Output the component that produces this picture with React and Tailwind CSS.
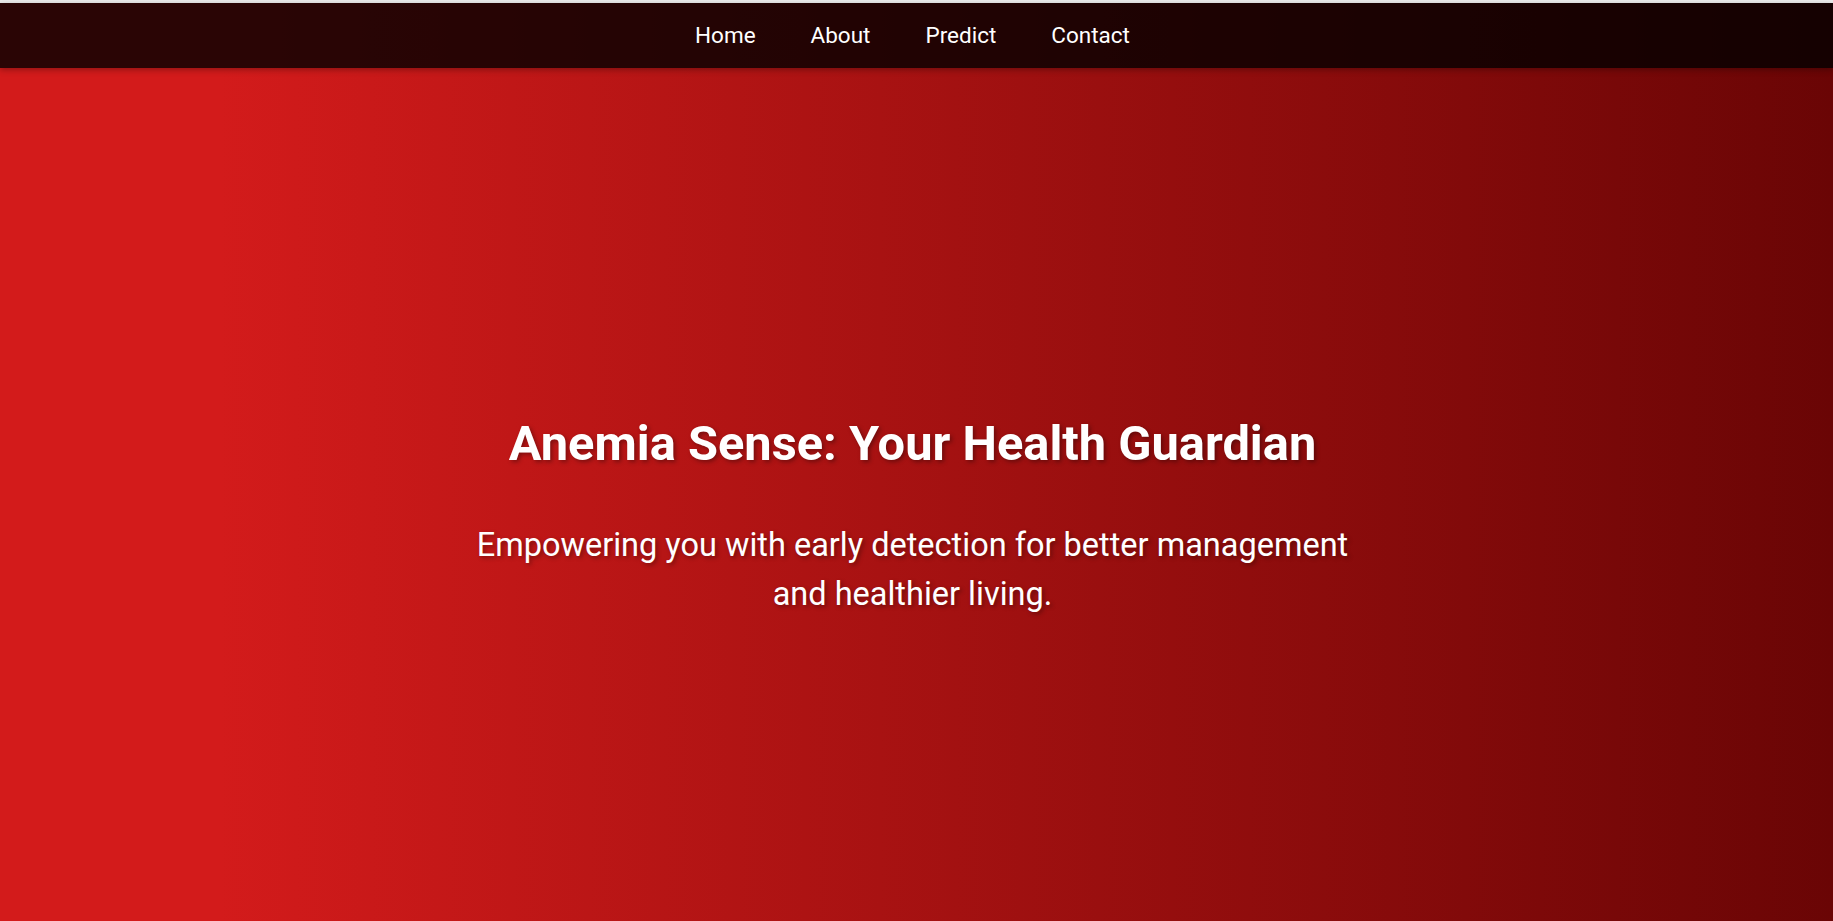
import React from "react";

export default function App() {
  const links = ["Home", "About", "Predict", "Contact"];
  return (
    <div className="w-[1833px] min-h-[921px] bg-[#ececec] pt-[3px]" style={{ fontFamily: "Roboto, 'Liberation Sans', sans-serif" }}>
      <div className="min-h-[918px] flex flex-col bg-[linear-gradient(to_right,#d31b1b_12%,#6a0505_100%)]">
        <nav className="h-[65px] bg-[rgba(0,0,0,0.8)] shadow-[0_2px_6px_rgba(0,0,0,0.3)] flex items-center justify-center pr-2 pt-[2px]">
          <ul className="flex items-center gap-[55px]">
            {links.map((l) => (
              <li key={l}>
                <a href="#" className="text-white text-[22.5px] leading-none">{l}</a>
              </li>
            ))}
          </ul>
        </nav>
        <section className="flex-1 flex flex-col items-center pt-[346px] pr-2 text-white text-center">
          <h1 className="text-[48.8px] leading-[60px] font-bold [text-shadow:2px_2px_4px_rgba(0,0,0,0.35)]">
            Anemia Sense: Your Health Guardian
          </h1>
          <p className="mt-[47px] max-w-[910px] text-[32.5px] leading-[49px] [text-shadow:2px_2px_4px_rgba(0,0,0,0.35)]">
            Empowering you with early detection for better management and healthier living.
          </p>
        </section>
      </div>
    </div>
  );
}
